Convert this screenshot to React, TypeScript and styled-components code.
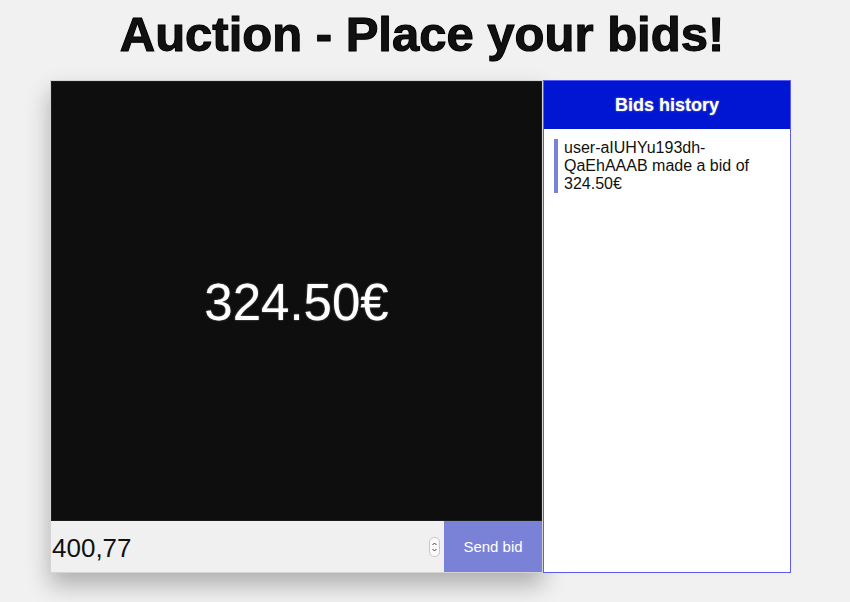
import React from "react";
import styled, { createGlobalStyle } from "styled-components";

const GlobalStyle = createGlobalStyle`
  html, body {
    margin: 0;
    padding: 0;
    background: #f1f1f1;
    font-family: "Liberation Sans", Arial, sans-serif;
  }
`;

const Page = styled.div`
  width: 850px;
  height: 602px;
  overflow: hidden;
`;

const Title = styled.h1`
  margin: 0;
  padding-top: 6px;
  height: 80px;
  box-sizing: border-box;
  text-align: center;
  font-size: 49px;
  line-height: 56px;
  font-weight: bold;
  color: #111;
  -webkit-text-stroke: 1px #000;
  text-shadow: 0 0 1px #777;
  padding-right: 6px;
`;

const Board = styled.div`
  display: flex;
  margin-left: 50px;
  width: 741px;
  height: 493px;
`;

const Stage = styled.div`
  width: 493px;
  display: flex;
  flex-direction: column;
  border: 1px solid #d4d4d4;
  box-sizing: border-box;
  box-shadow: 0 12px 22px rgba(0, 0, 0, 0.28);
  background: #f0f0f0;
`;

const Screen = styled.div`
  flex: 1;
  background: #0e0e0e;
  display: flex;
  align-items: center;
  justify-content: center;
  border: 1px solid #1c1c1c;
`;

const Price = styled.div`
  color: #fff;
  font-size: 51px;
  text-shadow: 0 0 2px #666, 0 0 1px #888;
  margin-top: 2px;
`;

const BidForm = styled.form`
  display: flex;
  align-items: center;
  height: 51px;
  margin: 0;
  background: #f0f0f0;
`;

const Amount = styled.input`
  flex: 1;
  min-width: 0;
  height: 100%;
  border: none;
  background: transparent;
  font-family: "Liberation Sans", Arial, sans-serif;
  font-size: 26px;
  color: #111;
  padding: 3px 0 0 1px;
  box-sizing: border-box;
  outline: none;
`;

const Spinner = styled.span`
  width: 9px;
  height: 18px;
  margin: 0 4px 0 0;
  border: 1px solid #c8c8c8;
  border-radius: 5px;
  background: #fafafa;
  display: flex;
  align-items: center;
  justify-content: center;
`;

const SendButton = styled.button`
  width: 98px;
  height: 100%;
  border: none;
  background: #7a82d7;
  color: #fff;
  font-family: "Liberation Sans", Arial, sans-serif;
  font-size: 15px;
  padding: 0;
`;

const History = styled.div`
  width: 248px;
  border: 1px solid #5b5bf0;
  box-sizing: border-box;
  background: #fff;
  display: flex;
  flex-direction: column;
`;

const HistoryHeader = styled.div`
  height: 48px;
  background: #0016d2;
  color: #fff;
  font-weight: bold;
  font-size: 18px;
  display: flex;
  align-items: center;
  justify-content: center;
  text-shadow: 0 0 2px #99a;
`;

const BidList = styled.ul`
  list-style: none;
  margin: 0;
  padding: 10px 18px 0 10px;
`;

const BidItem = styled.li`
  border-left: 4px solid #7a82d7;
  padding-left: 6px;
  font-size: 16px;
  line-height: 18px;
  color: #111;
`;

export default function App() {
  return (
    <Page>
      <GlobalStyle />
      <Title>Auction - Place your bids!</Title>
      <Board>
        <Stage>
          <Screen>
            <Price>324.50€</Price>
          </Screen>
          <BidForm onSubmit={(e) => e.preventDefault()}>
            <Amount type="text" defaultValue="400,77" />
            <Spinner>
              <svg width="7" height="14" viewBox="0 0 7 14">
                <path d="M1.5 5 L3.5 3 L5.5 5 M1.5 9 L3.5 11 L5.5 9" fill="none" stroke="#444" strokeWidth="1" />
              </svg>
            </Spinner>
            <SendButton type="submit">Send bid</SendButton>
          </BidForm>
        </Stage>
        <History>
          <HistoryHeader>Bids history</HistoryHeader>
          <BidList>
            <BidItem>user-aIUHYu193dh-QaEhAAAB made a bid of 324.50€</BidItem>
          </BidList>
        </History>
      </Board>
    </Page>
  );
}
